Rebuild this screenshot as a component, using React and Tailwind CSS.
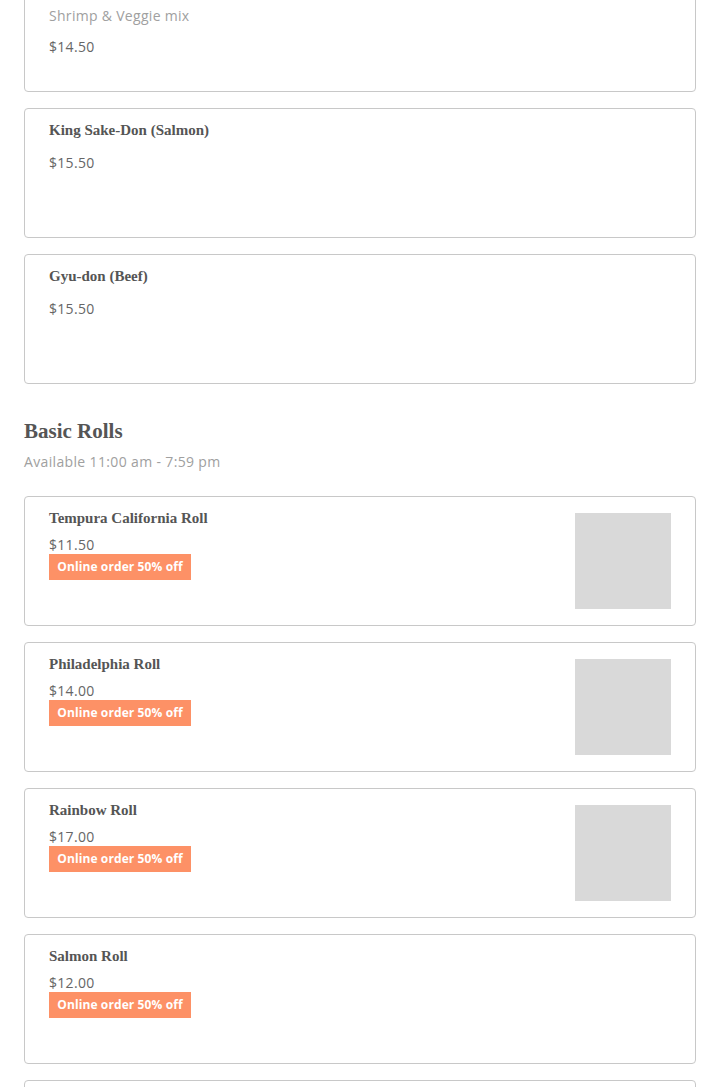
import React from "react";

const serif = { fontFamily: '"Liberation Serif", "DejaVu Serif", serif' };

function Card({ title, desc, price, badge, image }) {
  return (
    <div className="flex h-[130px] justify-between rounded-[4px] border border-[#c8c8c8] bg-white px-6 py-4">
      <div className="flex flex-col">
        <div className="mt-[-4px] text-[15px] font-bold leading-[18px] text-[#555]" style={serif}>
          {title}
        </div>
        {desc && <div className="mt-[14px] text-[14px] leading-[18px] tracking-[0.3px] text-[#a0a0a0]">{desc}</div>}
        {badge ? (
          <>
            <div className="mt-[9px] text-[14px] leading-[18px] tracking-[0.3px] text-[#666]">{price}</div>
            <div className="mt-0 flex h-[26px] w-[142px] items-center justify-center bg-[#fd9166] text-[12px] font-bold tracking-[0.1px] text-white">
              Online order 50% off
            </div>
          </>
        ) : (
          <div className={`${desc ? "mt-[13px]" : "mt-[15px]"} text-[14px] leading-[18px] tracking-[0.3px] text-[#666]`}>{price}</div>
        )}
      </div>
      {image && <div className="h-24 w-24 shrink-0 bg-[#d9d9d9]" />}
    </div>
  );
}

export default function App() {
  return (
    <div
      className="h-[1087px] overflow-hidden bg-white px-6"
      style={{ fontFamily: '"Open Sans", "Liberation Sans", sans-serif' }}
    >
      <div className="mt-[-38px] flex flex-col gap-4">
        <Card title="Shrimp Tempura-Don" desc="Shrimp & Veggie mix" price="$14.50" />
        <Card title="King Sake-Don (Salmon)" price="$15.50" />
        <Card title="Gyu-don (Beef)" price="$15.50" />
      </div>
      <div className="mt-[33px] text-[21px] font-bold leading-[28px] text-[#555]" style={serif}>
        Basic Rolls
      </div>
      <div className="mt-[7px] text-[14px] leading-[20px] tracking-[0.35px] text-[#a0a0a0]">Available 11:00 am - 7:59 pm</div>
      <div className="mt-6 flex flex-col gap-4">
        <Card title="Tempura California Roll" price="$11.50" badge image />
        <Card title="Philadelphia Roll" price="$14.00" badge image />
        <Card title="Rainbow Roll" price="$17.00" badge image />
        <Card title="Salmon Roll" price="$12.00" badge />
        <Card title="Spicy Tuna Roll" price="$12.00" badge />
      </div>
    </div>
  );
}
